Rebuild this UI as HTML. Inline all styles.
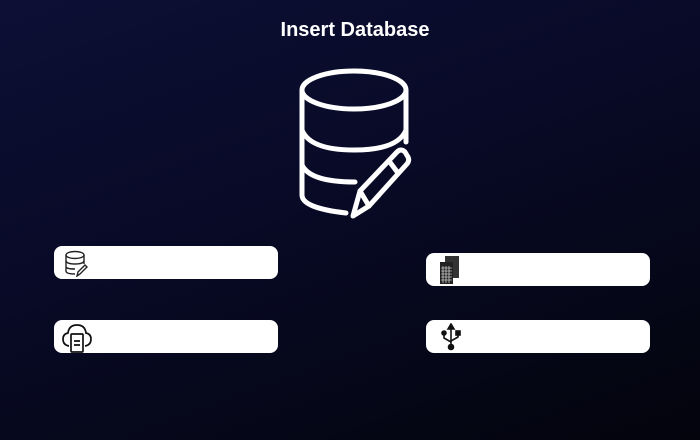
<!DOCTYPE html>
<html><head><style>
html,body{margin:0;padding:0}
body{width:700px;height:440px;overflow:hidden;position:relative;
background:linear-gradient(160deg,#0d0f35 0%,#080a26 45%,#03040c 100%);
font-family:"Liberation Sans",sans-serif}
h1{position:absolute;top:19px;left:0;width:710px;text-align:center;margin:0;color:#fff;font-size:20px;font-weight:bold;letter-spacing:0}
.b{position:absolute;width:224px;height:33px;background:#fff;border-radius:8px}
.b svg{position:absolute}
</style></head><body>
<h1>Insert Database</h1>
<svg style="position:absolute;left:0;top:0" width="700" height="240" fill="none" stroke="#fff" stroke-width="5" stroke-linecap="round" stroke-linejoin="round">
<ellipse cx="354" cy="90" rx="52" ry="19"/>
<path d="M302 90 V195 Q302 208 346 213"/>
<path d="M406 90 V142"/>
<path d="M302 130 Q310 150 354 150 Q398 150 406 130"/>
<path d="M302 165 Q310 182 355 182"/>
<path d="M353 216 L360 191 L397 152 Q401 148 405 152 L408 157 Q410 161 406 165 L369 206 Z"/>
<path d="M360 191 L369 206"/>
<path d="M389 161 L398 173"/>
</svg>
<div class="b" style="left:54px;top:246px">
<svg style="left:10px;top:4px" width="26" height="27" fill="none" stroke="#222" stroke-width="1.4">
<ellipse cx="11" cy="5" rx="9" ry="3.5"/><path d="M2 5V21Q2 24 11 24"/><path d="M20 5V14"/><path d="M2 11Q3 14 11 14Q19 14 20 11"/><path d="M2 17Q3 19 11 19"/><path d="M13 26L14 22L21 15L23 17L16 24Z"/>
</svg></div>
<div class="b" style="left:54px;top:320px">
<svg style="left:7px;top:2px" width="32" height="31" fill="none" stroke="#111" stroke-width="1.7">
<path d="M8 24Q2 23 2 17Q2 12 7 11Q8 3 16 3Q24 3 25 11Q30 12 30 17Q30 23 24 24"/><rect x="10" y="12" width="12" height="18" rx="1"/><path d="M13 19H19M13 23H19"/>
</svg></div>
<div class="b" style="left:426px;top:253px">
<svg style="left:13px;top:2px" width="22" height="30">
<rect x="6" y="1" width="14" height="22" fill="#333"/><rect x="1" y="7" width="13" height="22" fill="#222"/>
<g stroke="#fff" stroke-width=".6"><path d="M2 13H13M2 16H13M2 19H13M2 22H13M2 25H13M4 11V28M7 11V28M10 11V28"/></g>
</svg></div>
<div class="b" style="left:426px;top:320px">
<svg style="left:14px;top:3px" width="22" height="28" fill="#111" stroke="#111" stroke-width="1.6">
<path d="M11 2V24" fill="none"/><path d="M8 6L11 1L14 6Z"/><path d="M4 11V15L11 19M18 11V14L11 18" fill="none"/><circle cx="4" cy="10" r="2"/><rect x="16" y="8" width="4" height="4"/><circle cx="11" cy="24" r="2.5"/>
</svg></div>
</body></html>
